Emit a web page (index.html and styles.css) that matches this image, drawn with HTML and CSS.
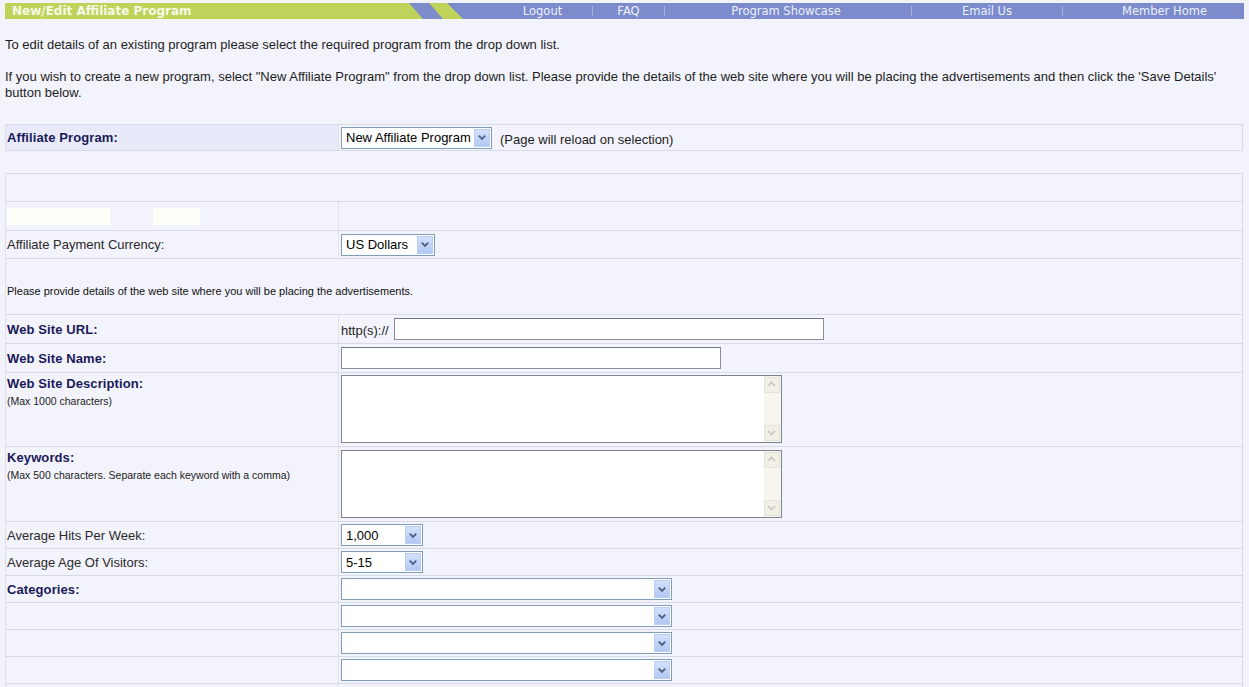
FILE: index.html
```html
<!DOCTYPE html>
<html>
<head>
<meta charset="utf-8">
<title>New/Edit Affiliate Program</title>
<link rel="stylesheet" href="styles.css">
</head>
<body>
<div class="header">
  <div class="title">New/Edit Affiliate Program</div>
  <svg class="stripes" width="56" height="16" viewBox="0 0 56 16" preserveAspectRatio="none">
    <rect x="0" y="0" width="56" height="16" fill="#7b8bcc"/>
    <polygon points="0,0 0,16 14,16" fill="#bfd35b"/>
    <polygon points="20,0 38,0 54,16 34,16" fill="#bfd35b"/>
  </svg>
  <div class="nav">
    <span class="nav-item first">Logout</span><span class="sep"></span>
    <span class="nav-item faq">FAQ</span><span class="sep"></span>
    <span class="nav-item showcase">Program Showcase</span><span class="sep"></span>
    <span class="nav-item email">Email Us</span><span class="sep"></span>
    <span class="nav-item home">Member Home</span>
  </div>
</div>

<div class="content">
  <p class="intro">To edit details of an existing program please select the required program from the drop down list.</p>
  <p class="intro">If you wish to create a new program, select "New Affiliate Program" from the drop down list. Please provide the details of the web site where you will be placing the advertisements and then click the 'Save Details'<br>button below.</p>

  <div class="table t1">
    <div class="row h26">
      <div class="label shaded center"><b class="lbl">Affiliate Program:</b></div>
      <div class="value center">
        <div class="sel w150"><span class="sel-text">New Affiliate Program</span><span class="arrow"><svg width="15" height="17" viewBox="0 0 15 17"><path d="M4 6.5 L7.5 10 L11 6.5" fill="none" stroke="#4d6185" stroke-width="2"/></svg></span></div>
        <span class="note">(Page will reload on selection)</span>
      </div>
    </div>
  </div>

  <div class="table t2">
    <div class="row h28 full"></div>
    <div class="row h29">
      <div class="label blocks"><span class="blk b1"></span><span class="blk b2"></span></div>
      <div class="value"></div>
    </div>
    <div class="row h28">
      <div class="label center"><span class="reg">Affiliate Payment Currency:</span></div>
      <div class="value center">
        <div class="sel w93"><span class="sel-text">US Dollars</span><span class="arrow"><svg width="15" height="17" viewBox="0 0 15 17"><path d="M4 6.5 L7.5 10 L11 6.5" fill="none" stroke="#4d6185" stroke-width="2"/></svg></span></div>
      </div>
    </div>
    <div class="row h56 full info">Please provide details of the web site where you will be placing the advertisements.</div>
    <div class="row h29">
      <div class="label center"><b class="lbl">Web Site URL:</b></div>
      <div class="value center"><span class="prefix">http(s)://</span><span class="input w430"></span></div>
    </div>
    <div class="row h29">
      <div class="label center"><b class="lbl">Web Site Name:</b></div>
      <div class="value center"><span class="input w380"></span></div>
    </div>
    <div class="row h74">
      <div class="label top"><b class="lbl">Web Site Description:</b><span class="small">(Max 1000 characters)</span></div>
      <div class="value top">
        <div class="textarea"><span class="ta-body"></span><span class="scroll"><span class="sbtn"><svg width="15" height="15" viewBox="0 0 15 15"><path d="M4 9 L7.5 5.5 L11 9" fill="none" stroke="#c8c6b8" stroke-width="1.6"/></svg></span><span class="track"></span><span class="sbtn"><svg width="15" height="15" viewBox="0 0 15 15"><path d="M4 6 L7.5 9.5 L11 6" fill="none" stroke="#c8c6b8" stroke-width="1.6"/></svg></span></span></div>
      </div>
    </div>
    <div class="row h75">
      <div class="label top"><b class="lbl">Keywords:</b><span class="small">(Max 500 characters. Separate each keyword with a comma)</span></div>
      <div class="value top kw">
        <div class="textarea"><span class="ta-body"></span><span class="scroll"><span class="sbtn"><svg width="15" height="15" viewBox="0 0 15 15"><path d="M4 9 L7.5 5.5 L11 9" fill="none" stroke="#c8c6b8" stroke-width="1.6"/></svg></span><span class="track"></span><span class="sbtn"><svg width="15" height="15" viewBox="0 0 15 15"><path d="M4 6 L7.5 9.5 L11 6" fill="none" stroke="#c8c6b8" stroke-width="1.6"/></svg></span></span></div>
      </div>
    </div>
    <div class="row h27">
      <div class="label center"><span class="reg">Average Hits Per Week:</span></div>
      <div class="value center">
        <div class="sel w81"><span class="sel-text">1,000</span><span class="arrow"><svg width="15" height="17" viewBox="0 0 15 17"><path d="M4 6.5 L7.5 10 L11 6.5" fill="none" stroke="#4d6185" stroke-width="2"/></svg></span></div>
      </div>
    </div>
    <div class="row h27">
      <div class="label center"><span class="reg">Average Age Of Visitors:</span></div>
      <div class="value center">
        <div class="sel w81"><span class="sel-text">5-15</span><span class="arrow"><svg width="15" height="17" viewBox="0 0 15 17"><path d="M4 6.5 L7.5 10 L11 6.5" fill="none" stroke="#4d6185" stroke-width="2"/></svg></span></div>
      </div>
    </div>
    <div class="row h27">
      <div class="label center"><b class="lbl">Categories:</b></div>
      <div class="value center">
        <div class="sel w330"><span class="sel-text"></span><span class="arrow"><svg width="15" height="17" viewBox="0 0 15 17"><path d="M4 6.5 L7.5 10 L11 6.5" fill="none" stroke="#4d6185" stroke-width="2"/></svg></span></div>
      </div>
    </div>
    <div class="row h27">
      <div class="label"></div>
      <div class="value center">
        <div class="sel w330"><span class="sel-text"></span><span class="arrow"><svg width="15" height="17" viewBox="0 0 15 17"><path d="M4 6.5 L7.5 10 L11 6.5" fill="none" stroke="#4d6185" stroke-width="2"/></svg></span></div>
      </div>
    </div>
    <div class="row h27">
      <div class="label"></div>
      <div class="value center">
        <div class="sel w330"><span class="sel-text"></span><span class="arrow"><svg width="15" height="17" viewBox="0 0 15 17"><path d="M4 6.5 L7.5 10 L11 6.5" fill="none" stroke="#4d6185" stroke-width="2"/></svg></span></div>
      </div>
    </div>
    <div class="row h27">
      <div class="label"></div>
      <div class="value center">
        <div class="sel w330"><span class="sel-text"></span><span class="arrow"><svg width="15" height="17" viewBox="0 0 15 17"><path d="M4 6.5 L7.5 10 L11 6.5" fill="none" stroke="#4d6185" stroke-width="2"/></svg></span></div>
      </div>
    </div>
    <div class="row h27">
      <div class="label"></div>
      <div class="value"></div>
    </div>
  </div>
</div>
</body>
</html>
```

FILE: styles.css
```css
html, body {
  margin: 0;
  padding: 0;
  background: #f3f3fc;
}
body {
  font-family: "Liberation Sans", Arial, sans-serif;
  font-size: 13px;
  color: #1e1e1e;
}

/* Header bar */
.header {
  display: flex;
  margin: 3px 5px 0 5px;
  height: 16px;
  width: 1239px;
  overflow: hidden;
}
.title {
  width: 404px;
  flex: none;
  background: #bfd35b;
  color: #f6f9e6;
  font-family: "DejaVu Sans", Verdana, sans-serif;
  font-weight: bold;
  font-size: 12px;
  line-height: 16px;
  padding-left: 7px;
  box-sizing: border-box;
}
.stripes {
  flex: none;
  display: block;
}
.nav {
  flex: 1;
  display: flex;
  align-items: center;
  background: #7b8bcc;
  font-family: "DejaVu Sans", Verdana, sans-serif;
  font-size: 11.5px;
  color: #eef0fb;
  line-height: 16px;
}
.nav-item {
  display: block;
  text-align: center;
  white-space: nowrap;
  box-sizing: border-box;
}
.nav-item.first { width: 127px; padding-left: 28px; }
.nav-item.faq { width: 71px; }
.nav-item.showcase { width: 246px; padding-right: 4px; }
.nav-item.email { width: 150px; }
.nav-item.home { width: 181px; padding-left: 22px; }
.sep {
  display: block;
  width: 1px;
  height: 10px;
  background: #a8b2dd;
  flex: none;
}

/* Intro */
.content {
  padding: 0 5px;
}
.intro {
  margin: 18px 0 0 0;
  line-height: 16px;
  white-space: nowrap;
  color: #1e1e1e;
}
.intro + .intro {
  margin-top: 16px;
}

/* Tables */
.table {
  width: 1238px;
  border-top: 1px solid #d6d9e8;
  border-left: 1px solid #dcdfec;
  border-right: 1px solid #d6d9e8;
  box-sizing: border-box;
}
.t1 { margin-top: 23px; }
.t2 { margin-top: 22px; }
.row {
  display: flex;
  border-bottom: 1px solid #d6d9e8;
  box-sizing: border-box;
}
.h26 { height: 26px; }
.h27 { height: 27px; }
.h28 { height: 28px; }
.h29 { height: 29px; }
.h56 { height: 56px; }
.h74 { height: 74px; }
.h75 { height: 75px; }

.label {
  width: 333px;
  flex: none;
  border-right: 1px solid #dfe2ee;
  padding-left: 1px;
  box-sizing: border-box;
  display: flex;
  flex-direction: column;
}
.label.shaded {
  background: #e8eaf9;
}
.value {
  flex: 1;
  display: flex;
  padding-left: 2px;
}
.center { align-items: center; }
.label.center { flex-direction: row; align-items: center; }
.label.top { padding-top: 3px; }
.value.top { padding-top: 2px; align-items: flex-start; }
.value.top.kw { padding-top: 3px; }

.lbl {
  font-weight: bold;
  color: #1a1a58;
  font-size: 13px;
  letter-spacing: 0.1px;
}
.reg {
  color: #2a2a2a;
}
.small {
  font-size: 10.5px;
  color: #222;
  margin-top: 4px;
}
.info {
  font-size: 11px;
  align-items: center;
  padding-left: 1px;
  padding-top: 8px;
  color: #111;
}

/* white blocks */
.blocks {
  flex-direction: row;
  align-items: flex-start;
  padding-top: 6px;
}
.blk {
  display: block;
  height: 17px;
  background: #fffff9;
}
.b1 { width: 103px; }
.b2 { width: 47px; margin-left: 43px; }

/* Select */
.sel {
  height: 22px;
  border: 1px solid #7f9db9;
  background: #fff;
  box-sizing: border-box;
  display: flex;
  align-items: center;
  justify-content: space-between;
  padding: 1px;
}
.sel-text {
  padding-left: 3px;
  font-size: 13px;
  color: #000;
  white-space: nowrap;
}
.arrow {
  width: 16px;
  height: 18px;
  display: flex;
  align-items: center;
  justify-content: center;
  background: linear-gradient(#d3e1fb, #b2c8f3);
  border: 1px solid #bacdf4;
  box-sizing: border-box;
}
.arrow svg { display: block; }
.w150 { width: 151px; }
.w93 { width: 94px; }
.w81 { width: 82px; }
.w330 { width: 331px; }

.note {
  margin-left: 8px;
  color: #1e1e1e;
  padding-top: 3px;
}

/* Inputs */
.prefix {
  color: #1e1e1e;
  margin-right: 5px;
  padding-top: 3px;
}
.input {
  display: block;
  height: 22px;
  background: #fff;
  border: 1px solid #8c8c9c;
  border-top-color: #6f7a8e;
  box-sizing: border-box;
}
.w430 { width: 430px; }
.w380 { width: 380px; }

/* Textarea */
.textarea {
  width: 441px;
  height: 68px;
  border: 1px solid #7c8494;
  background: #fff;
  box-sizing: border-box;
  display: flex;
}
.ta-body {
  flex: 1;
}
.scroll {
  width: 17px;
  display: flex;
  flex-direction: column;
  background: #f7f6ee;
  padding: 1px 1px 1px 0;
  box-sizing: border-box;
}
.sbtn {
  display: block;
  height: 16px;
  background: #f1f0e6;
  border: 1px solid #e5e3d6;
  box-sizing: border-box;
}
.sbtn svg { display: block; margin: -1px 0 0 -1px; }
.track { flex: 1; }
```
